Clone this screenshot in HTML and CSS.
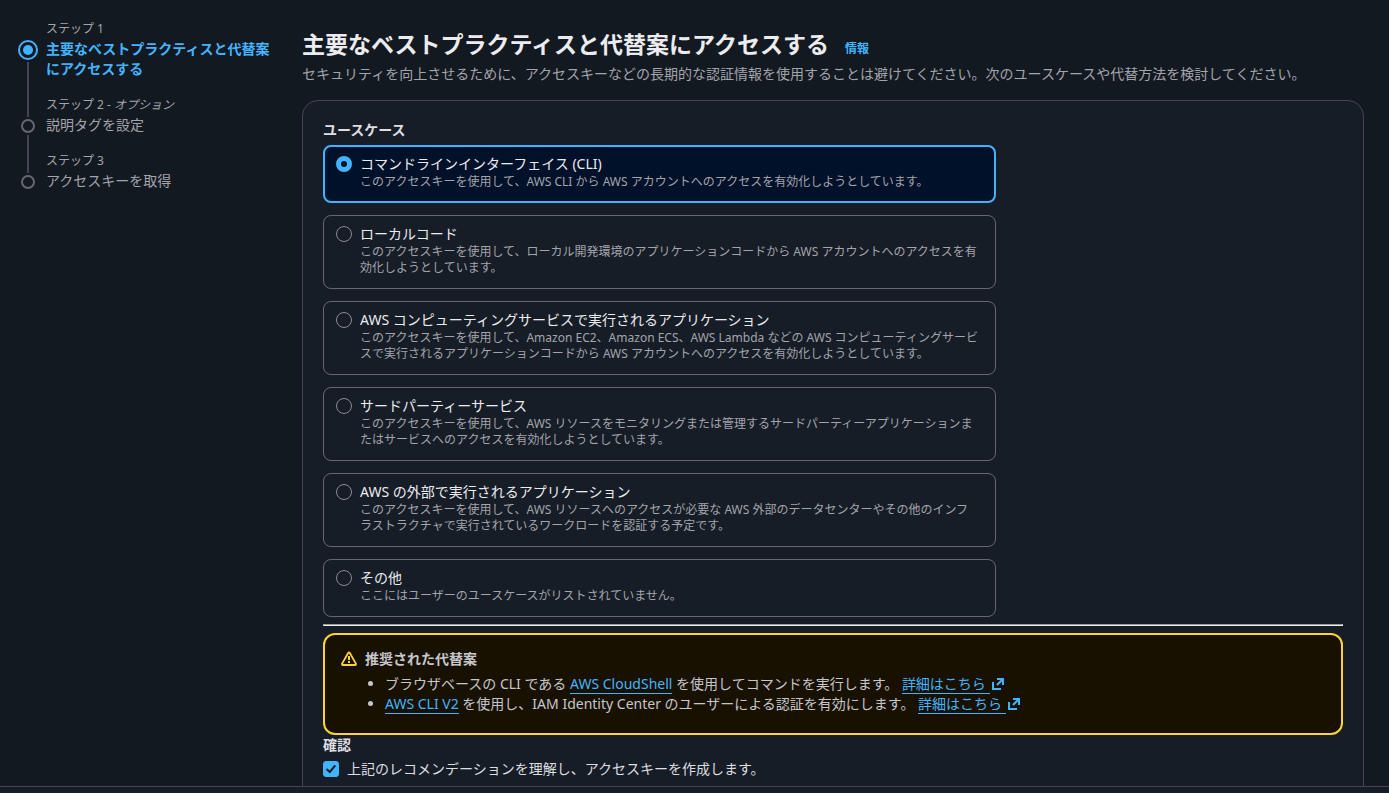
FILE: index.html
```html
<!DOCTYPE html>
<html lang="ja">
<head>
<meta charset="utf-8">
<meta name="viewport" content="width=device-width, initial-scale=1">
<title>主要なベストプラクティスと代替案にアクセスする</title>
<link rel="stylesheet" href="styles.css">
</head>
<body>
<svg class="sprite" aria-hidden="true">
  <symbol id="external" viewBox="0 0 16 16"><path d="M3 6v7h8M7 3h6v6M13 3 7 9" fill="none" stroke="currentColor" stroke-width="2"/></symbol>
</svg>
<div class="layout">
  <nav class="steps" aria-label="ステップ">
    <ol class="step-list">
      <li class="step active">
        <span class="marker"><span class="circle"></span><span class="line"></span></span>
        <div class="step-text"><span class="step-label">ステップ 1</span><span class="step-title">主要なベストプラクティスと代替案にアクセスする</span></div>
      </li>
      <li class="step">
        <span class="marker"><span class="lead"></span><span class="circle"></span><span class="line"></span></span>
        <div class="step-text"><span class="step-label">ステップ 2 - <em>オプション</em></span><span class="step-title">説明タグを設定</span></div>
      </li>
      <li class="step">
        <span class="marker"><span class="lead"></span><span class="circle"></span></span>
        <div class="step-text"><span class="step-label">ステップ 3</span><span class="step-title">アクセスキーを取得</span></div>
      </li>
    </ol>
  </nav>
  <main class="content">
    <header class="heading">
      <h1>主要なベストプラクティスと代替案にアクセスする</h1>
      <a class="info" href="#">情報</a>
    </header>
    <p class="lead-text">セキュリティを向上させるために、アクセスキーなどの長期的な認証情報を使用することは避けてください。次のユースケースや代替方法を検討してください。</p>
    <section class="card">
      <fieldset class="use-cases">
        <legend class="field-label">ユースケース</legend>
        <div class="options">
          <label class="option selected"><input class="radio" type="radio" name="usecase" checked><span class="option-text"><span class="option-title">コマンドラインインターフェイス (CLI)</span><span class="option-desc">このアクセスキーを使用して、AWS CLI から AWS アカウントへのアクセスを有効化しようとしています。</span></span></label>
          <label class="option"><input class="radio" type="radio" name="usecase"><span class="option-text"><span class="option-title">ローカルコード</span><span class="option-desc">このアクセスキーを使用して、ローカル開発環境のアプリケーションコードから AWS アカウントへのアクセスを有効化しようとしています。</span></span></label>
          <label class="option"><input class="radio" type="radio" name="usecase"><span class="option-text"><span class="option-title">AWS コンピューティングサービスで実行されるアプリケーション</span><span class="option-desc">このアクセスキーを使用して、Amazon EC2、Amazon ECS、AWS Lambda などの AWS コンピューティングサービスで実行されるアプリケーションコードから AWS アカウントへのアクセスを有効化しようとしています。</span></span></label>
          <label class="option"><input class="radio" type="radio" name="usecase"><span class="option-text"><span class="option-title">サードパーティーサービス</span><span class="option-desc">このアクセスキーを使用して、AWS リソースをモニタリングまたは管理するサードパーティーアプリケーションまたはサービスへのアクセスを有効化しようとしています。</span></span></label>
          <label class="option"><input class="radio" type="radio" name="usecase"><span class="option-text"><span class="option-title">AWS の外部で実行されるアプリケーション</span><span class="option-desc">このアクセスキーを使用して、AWS リソースへのアクセスが必要な AWS 外部のデータセンターやその他のインフラストラクチャで実行されているワークロードを認証する予定です。</span></span></label>
          <label class="option"><input class="radio" type="radio" name="usecase"><span class="option-text"><span class="option-title">その他</span><span class="option-desc">ここにはユーザーのユースケースがリストされていません。</span></span></label>
        </div>
      </fieldset>
      <hr class="divider">
      <div class="alert" role="note">
        <svg class="icon warning" viewBox="0 0 16 16" aria-hidden="true"><path d="M7.300 1.800Q8 .8 8.700 1.800L14.900 12.600Q15.300 14 14 14H2Q.7 14 1.100 12.600Z" fill="none" stroke="currentColor" stroke-width="1.800" stroke-linejoin="round"/><path d="M8 5v4M8 10v2" fill="none" stroke="currentColor" stroke-width="2"/></svg>
        <div class="alert-body">
          <h2 class="alert-title">推奨された代替案</h2>
          <ul class="alert-list">
            <li>ブラウザベースの CLI である <a class="link" href="#">AWS CloudShell</a> を使用してコマンドを実行します。 <a class="link" href="#">詳細はこちら&nbsp;</a><svg class="icon external" aria-hidden="true"><use href="#external"/></svg></li>
            <li><a class="link" href="#">AWS CLI V2</a> を使用し、IAM Identity Center のユーザーによる認証を有効にします。 <a class="link" href="#">詳細はこちら&nbsp;</a><svg class="icon external" aria-hidden="true"><use href="#external"/></svg></li>
          </ul>
        </div>
      </div>
      <fieldset class="confirm">
        <legend class="field-label">確認</legend>
        <label class="check-row">
          <span class="check"><input class="checkbox" type="checkbox" checked><svg class="tick" viewBox="0 0 16 16" aria-hidden="true"><path d="M3.500 8 6.800 11 12.300 4.300" fill="none" stroke="currentColor" stroke-width="2"/></svg></span>
          <span>上記のレコメンデーションを理解し、アクセスキーを作成します。</span>
        </label>
      </fieldset>
    </section>
  </main>
</div>
<footer class="bottom-bar"></footer>
</body>
</html>
```

FILE: styles.css
```css
* { box-sizing: border-box; }

body {
  margin: 0;
  height: 100vh;
  display: flex;
  flex-direction: column;
  overflow: hidden;
  background: #131920;
  color: #c6c6cd;
  font-family: "Noto Sans", "Noto Sans CJK JP", sans-serif;
  font-size: 14px;
  line-height: 20px;
}

h1, h2, p, ul, ol, fieldset { margin: 0; padding: 0; }
fieldset { border: 0; min-width: 0; }
legend { padding: 0; }

.sprite { display: none; }

.layout {
  flex: 1;
  min-height: 0;
  overflow: hidden;
  display: grid;
  grid-template-columns: 256px minmax(0, 1fr);
  column-gap: 28px;
  padding: 20px 25px 0 18px;
}

.bottom-bar {
  height: 7px;
  border-top: 1px solid #424650;
  background: #161d26;
}

/* Step navigation */
.step-list { list-style: none; }
.step { display: flex; gap: 8px; color: #a4a4ad; }
.marker {
  width: 20px;
  flex: none;
  display: flex;
  flex-direction: column;
  align-items: center;
  gap: 2px;
}
.lead { width: 2px; height: 21px; background: #424650; }
.line { width: 2px; flex: 1; background: #424650; }
.circle {
  width: 14px;
  height: 14px;
  border: 2px solid #656871;
  border-radius: 50%;
}
.active .marker { padding-top: 20px; }
.active .circle {
  width: 20px;
  height: 20px;
  border-color: #42b4ff;
  padding: 3px;
  background: #42b4ff content-box;
}
.step-text { display: flex; flex-direction: column; gap: 2px; padding: 1px 0 17px; }
.step-label { font-size: 12px; line-height: 16px; }
.active .step-title { color: #42b4ff; font-weight: 700; }

/* Page heading */
.heading { display: flex; align-items: baseline; gap: 16px; padding-top: 8px; }
h1 { font-size: 23px; line-height: 32px; font-weight: 700; color: #ebebf0; }
.info { font-size: 12px; line-height: 16px; font-weight: 700; color: #42b4ff; text-decoration: none; }
.lead-text { color: #a4a4ad; padding: 4px 0 16px; }

.card {
  background: #161d26;
  border: 1px solid #424650;
  border-radius: 16px 16px 0 0;
  padding: 19px 20px 20px;
}
.field-label { font-weight: 700; color: #dedee3; }

/* Use case tiles */
.options { display: grid; gap: 12px; width: 66%; padding-top: 5px; }
.option {
  display: flex;
  gap: 8px;
  border: 1px solid #656871;
  border-radius: 8px;
  padding: 8px 16px 12px 12px;
}
.option.selected { border: 2px solid #42b4ff; background: #001129; padding: 7px 15px 11px 11px; }
.option-text { display: flex; flex-direction: column; min-width: 0; }
.option-title { color: #ebebf0; }
.option-desc { font-size: 12px; line-height: 16px; color: #a4a4ad; }
.radio {
  appearance: none;
  flex: none;
  width: 16px;
  height: 16px;
  margin: 2px 0 0;
  border: 1px solid #8c8c94;
  border-radius: 50%;
}
.radio:checked { border: 5px solid #42b4ff; background: #001129; }

.divider { margin: 7px 0; border: 1px solid; border-color: #9a9a9a #eeeeee #eeeeee #9a9a9a; }

/* Alert */
.alert {
  display: flex;
  gap: 8px;
  border: 2px solid #fbd332;
  border-radius: 12px;
  background: #191100;
  padding: 14px 16px 19px;
}
.icon { width: 16px; height: 16px; flex: none; }
.warning { color: #fbd332; margin-top: 2px; }
.alert-title { font-size: 14px; line-height: 20px; font-weight: 700; }
.alert-list { padding: 5px 0 0 20px; }
.link { color: #42b4ff; text-decoration: none; border-bottom: 1px solid; }
.external { color: #42b4ff; vertical-align: -3px; }

/* Acknowledgement */
.check-row { display: flex; align-items: center; gap: 8px; padding-top: 4px; color: #dedee3; }
.check { display: grid; width: 16px; height: 16px; }
.checkbox, .tick { grid-area: 1 / 1; width: 16px; height: 16px; margin: 0; }
.checkbox { appearance: none; border: 1px solid #8c8c94; border-radius: 3px; }
.checkbox:checked { border-color: #42b4ff; background: #42b4ff; }
.tick { color: #161d26; pointer-events: none; }
```
